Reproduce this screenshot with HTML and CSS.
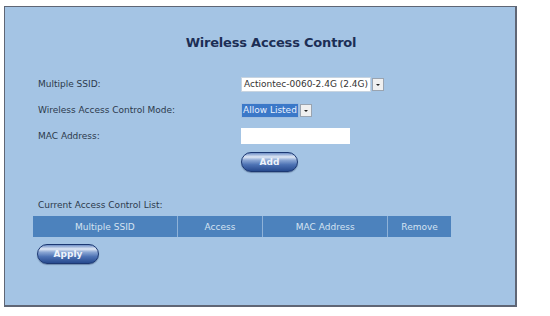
FILE: index.html
```html
<!DOCTYPE html>
<html lang="en">
<head>
  <meta charset="UTF-8">
  <title>Wireless Access Control</title>
  <link rel="stylesheet" href="styles.css">
</head>
<body>
  <div class="panel">
    <h1>Wireless Access Control</h1>

    <div class="form">
      <label>Multiple SSID:</label>
      <div class="field">
        <span class="select">
          <span class="select-text">Actiontec-0060-2.4G (2.4G)</span>
          <span class="select-btn"></span>
        </span>
      </div>

      <label>Wireless Access Control Mode:</label>
      <div class="field">
        <span class="select">
          <span class="select-text selected">Allow Listed</span>
          <span class="select-btn"></span>
        </span>
      </div>

      <label>MAC Address:</label>
      <div class="field">
        <input type="text" class="mac-input">
      </div>

      <span></span>
      <div class="field">
        <button class="pill add-btn">Add</button>
      </div>
    </div>

    <div class="list-title">Current Access Control List:</div>
    <table class="acl">
      <thead>
        <tr>
          <th class="col-ssid">Multiple SSID</th>
          <th class="col-access">Access</th>
          <th class="col-mac">MAC Address</th>
          <th class="col-remove">Remove</th>
        </tr>
      </thead>
    </table>

    <button class="pill apply-btn">Apply</button>
  </div>
</body>
</html>
```

FILE: styles.css
```css
body {
  margin: 0;
  padding: 6px 0 0 4px;
  background-color: #fff;
  font-family: 'DejaVu Sans', Verdana, sans-serif;
}

.panel {
  box-sizing: border-box;
  width: 513px;
  height: 301px;
  background-color: #a4c4e4;
  border: 1px solid #5f6675;
  border-right-width: 2px;
  border-bottom-width: 2px;
  padding: 28px 0 0 0;
}

h1 {
  margin: 0;
  text-align: center;
  font-size: 13px;
  font-weight: bold;
  color: #1c2e55;
  letter-spacing: -0.2px;
  padding-left: 22px;
}

.form {
  display: grid;
  grid-template-columns: 203px auto;
  grid-template-rows: 26px 26px 25px 28px;
  align-items: center;
  margin-top: 21px;
  padding-left: 33px;
}

label {
  font-size: 9px;
  color: #2c3a4c;
}

.field {
  display: flex;
  align-items: center;
}

.select {
  display: flex;
  align-items: center;
  gap: 1px;
}

.select-text {
  background-color: #fff;
  font-size: 9px;
  color: #333;
  padding: 0 2px;
  line-height: 13px;
  border: 1px solid #c8d4e0;
}

.select-text.selected {
  background-color: #3b78c8;
  color: #e8f0ff;
  padding: 0 1px;
  border-color: #9fbde0;
}

.select-btn {
  width: 10px;
  height: 11px;
  background-color: #f0f0f0;
  border: 1px solid #9aa4b0;
  position: relative;
}

.select-btn::after {
  content: '';
  position: absolute;
  left: 3px;
  top: 5px;
  border-left: 2px solid transparent;
  border-right: 2px solid transparent;
  border-top: 2px solid #222;
}

.mac-input {
  box-sizing: border-box;
  width: 109px;
  height: 16px;
  border: none;
  background-color: #fff;
  margin: 0;
  padding: 0;
}

.pill {
  box-sizing: border-box;
  border: 1px solid #1c3872;
  border-radius: 11px;
  background: linear-gradient(to bottom, #6f8fc6 0%, #dfe8f5 22%, #8aa6d4 40%, #4d72b4 65%, #274a8e 100%);
  color: #eef3fb;
  font-family: 'DejaVu Sans', Verdana, sans-serif;
  font-size: 9px;
  font-weight: bold;
  padding: 0;
  box-shadow: 0 1px 1px rgba(30, 50, 90, 0.4);
}

.add-btn {
  width: 57px;
  height: 20px;
}

.list-title {
  margin-top: 24px;
  padding-left: 33px;
  font-size: 9px;
  line-height: 11px;
  color: #2c3a4c;
}

.acl {
  border-collapse: collapse;
  margin: 5px 0 0 28px;
  width: 418px;
}

.acl th {
  height: 21px;
  padding: 0;
  background-color: #4c82bd;
  color: #d4e2f2;
  font-size: 9px;
  font-weight: normal;
  border-left: 1px solid #8fb2d8;
}

.acl th:first-child {
  border-left: none;
}

.col-ssid { width: 145px; }
.col-access { width: 85px; }
.col-mac { width: 125px; }
.col-remove { width: 63px; }

.apply-btn {
  display: block;
  width: 62px;
  height: 20px;
  margin: 7px 0 0 32px;
}
```
